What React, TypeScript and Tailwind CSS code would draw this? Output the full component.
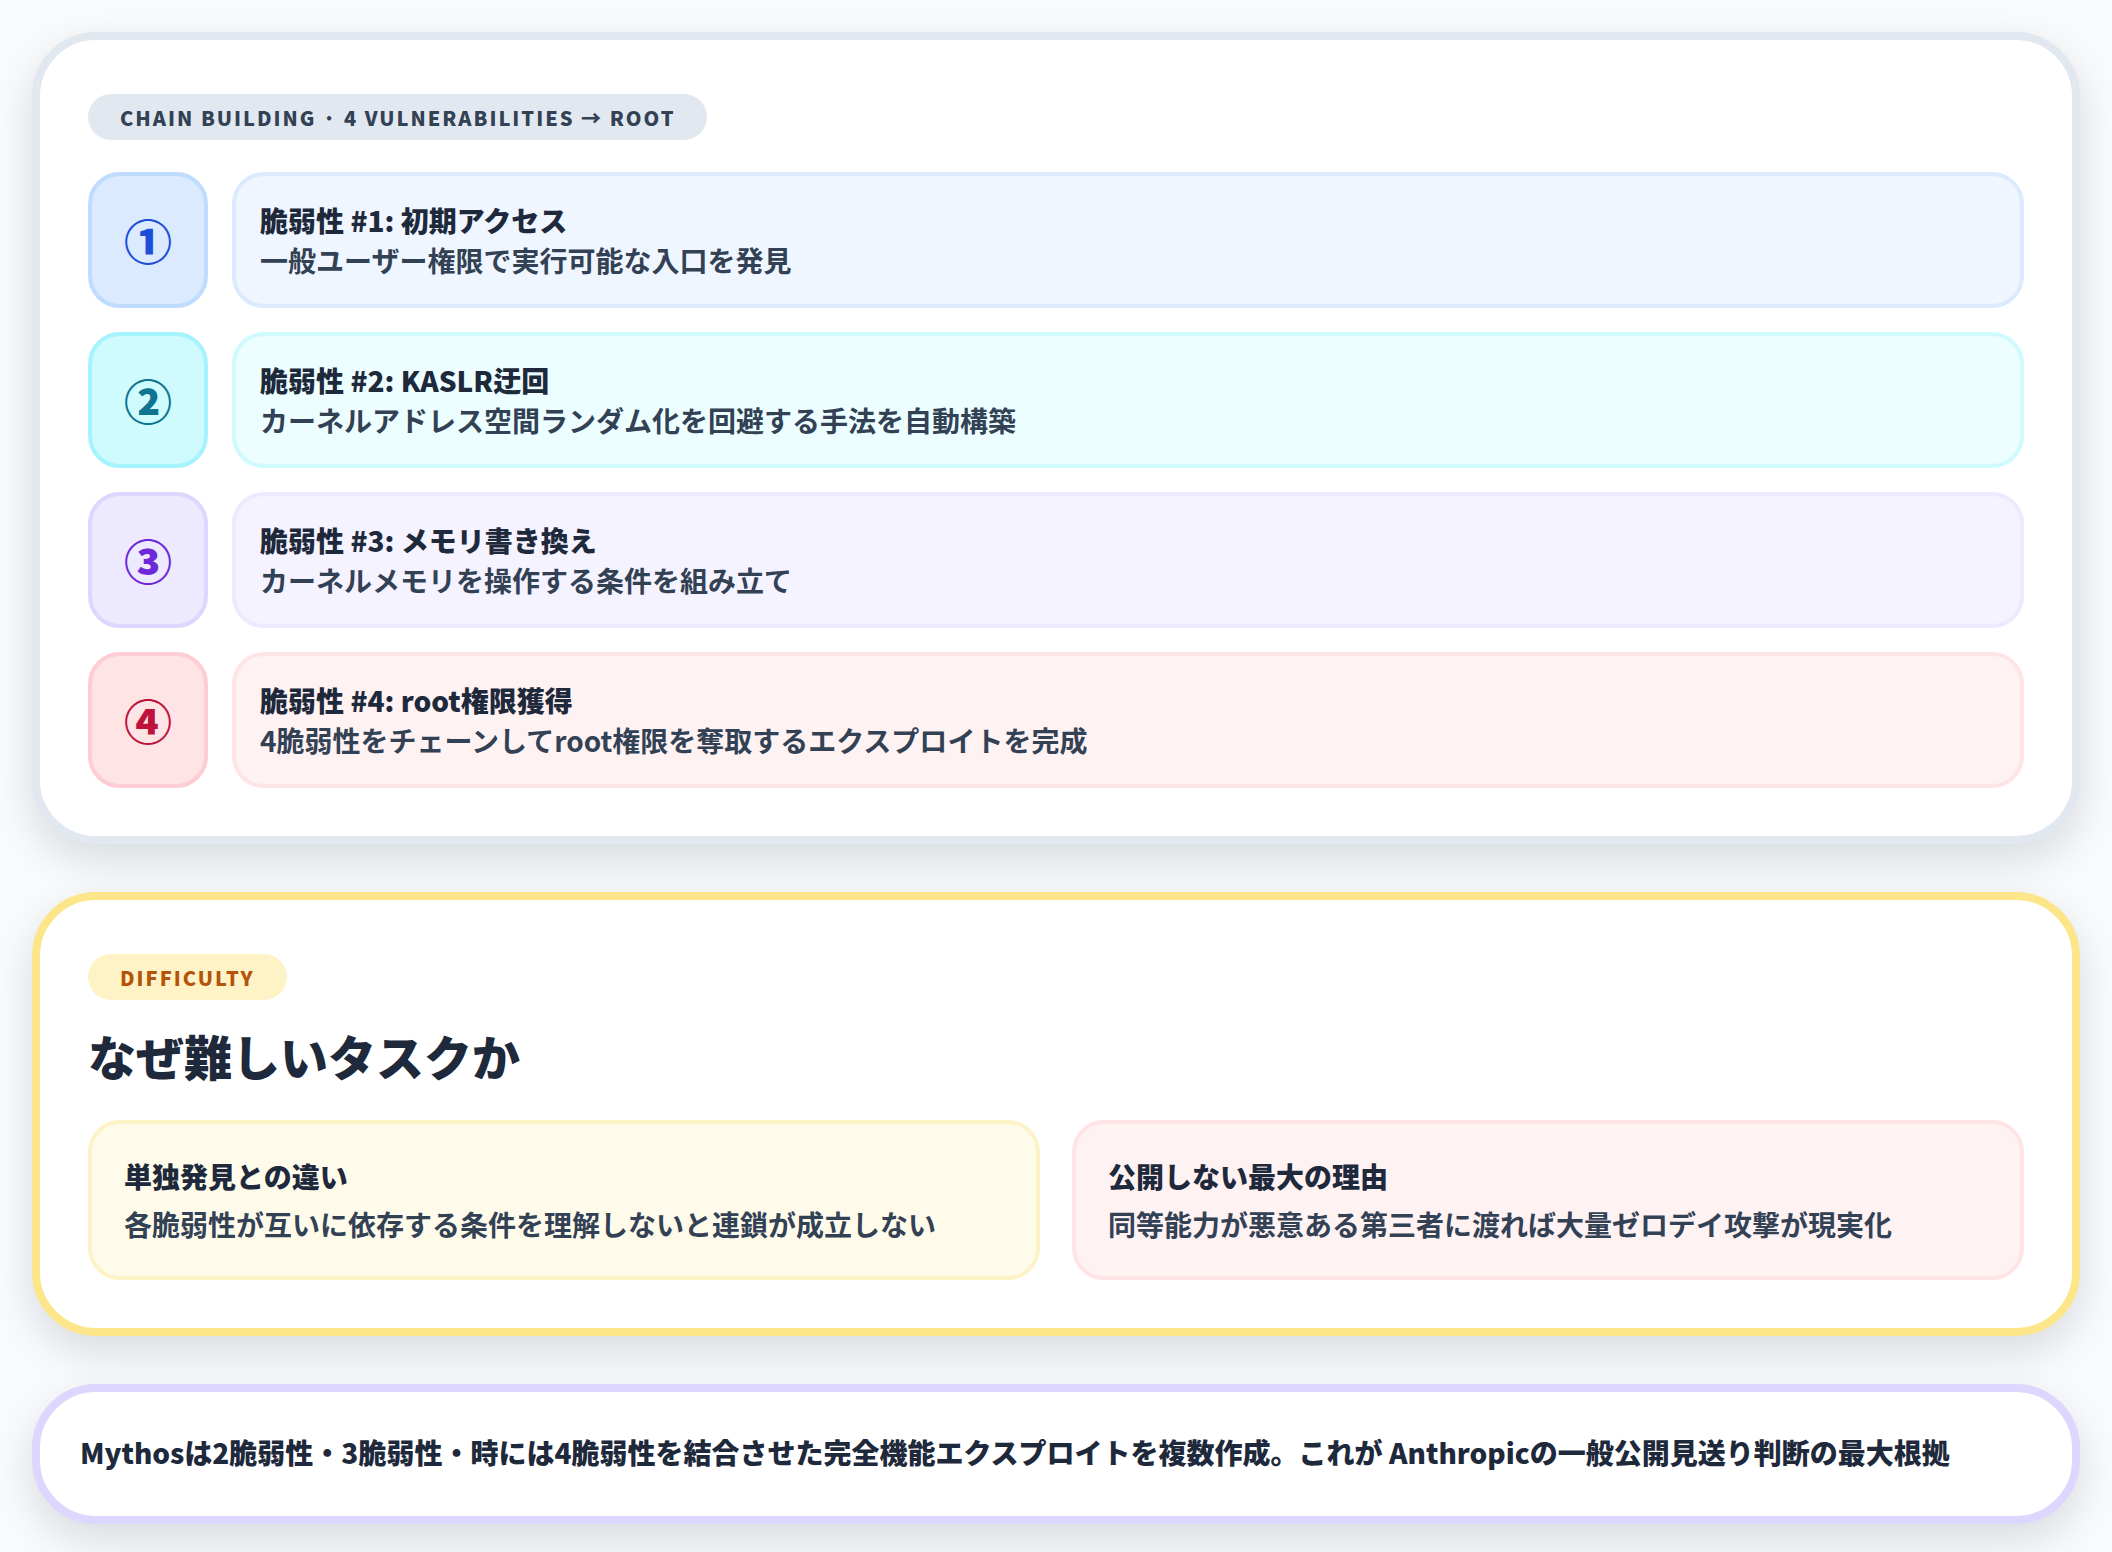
const STEPS = [
  {
    mark: '①',
    title: '脆弱性 #1: 初期アクセス',
    desc: '一般ユーザー権限で実行可能な入口を発見',
    box: 'bg-[#dbeafe] border-[#bfdbfe] text-[#1d4ed8]',
    body: 'bg-[#eff6ff] border-[#dbeafe]',
  },
  {
    mark: '②',
    title: '脆弱性 #2: KASLR迂回',
    desc: 'カーネルアドレス空間ランダム化を回避する手法を自動構築',
    box: 'bg-[#cffafe] border-[#a5f3fc] text-[#0e7490]',
    body: 'bg-[#ecfeff] border-[#cffafe]',
  },
  {
    mark: '③',
    title: '脆弱性 #3: メモリ書き換え',
    desc: 'カーネルメモリを操作する条件を組み立て',
    box: 'bg-[#ede9fe] border-[#ddd6fe] text-[#6d28d9]',
    body: 'bg-[#f5f3ff] border-[#ede9fe]',
  },
  {
    mark: '④',
    title: '脆弱性 #4: root権限獲得',
    desc: '4脆弱性をチェーンしてroot権限を奪取するエクスプロイトを完成',
    box: 'bg-[#ffe4e6] border-[#fecdd3] text-[#be123c]',
    body: 'bg-[#fef2f3] border-[#ffe4e6]',
  },
];

const CARD = 'bg-white border-[8px] rounded-[64px] shadow-[0_16px_40px_rgba(15,23,42,0.13)]';

function Pill({ className, children }: { className: string; children: React.ReactNode }) {
  return (
    <span className={`inline-block h-[46px] rounded-full px-8 text-[20px] leading-[48px] font-black tracking-[2px] ${className}`}>
      {children}
    </span>
  );
}

export default function App() {
  return (
    <div className="min-h-[1552px] bg-[#f8fafc] px-8 pt-8 font-['Noto_Sans_CJK_JP','Noto_Sans',sans-serif]">
      {/* Chain steps */}
      <section className={`${CARD} border-[#e2e8f0] px-12 pt-[54px] pb-12`}>
        <Pill className="bg-[#e2e8f0] text-[#334155]">CHAIN BUILDING · 4 VULNERABILITIES → ROOT</Pill>
        <div className="mt-8 flex flex-col gap-6">
          {STEPS.map((step) => (
            <div key={step.mark} className="flex gap-6">
              <div className={`flex w-[120px] shrink-0 items-center justify-center rounded-[32px] border-4 pb-[3px] text-[48px] leading-none font-black ${step.box}`}>
                {step.mark}
              </div>
              <div className={`flex-1 rounded-[32px] border-4 p-6 text-[28px] leading-10 ${step.body}`}>
                <div className="font-black text-[#1e293b]">{step.title}</div>
                <div className="font-bold text-[#334155]">{step.desc}</div>
              </div>
            </div>
          ))}
        </div>
      </section>

      {/* Difficulty */}
      <section className={`${CARD} mt-12 border-[#fde68a] px-12 pt-[54px] pb-12`}>
        <Pill className="bg-[#fef3c7] text-[#b45309]">DIFFICULTY</Pill>
        <h2 className="mt-[21px] mb-[31px] text-[48px] leading-[68px] font-black text-[#1e293b]">なぜ難しいタスクか</h2>
        <div className="grid grid-cols-2 gap-8">
          <div className="rounded-[32px] border-4 border-[#fef3c7] bg-[#fffbeb] px-8 py-7 text-[28px] leading-[48px]">
            <div className="font-black text-[#1e293b]">単独発見との違い</div>
            <div className="font-bold text-[#334155]">各脆弱性が互いに依存する条件を理解しないと連鎖が成立しない</div>
          </div>
          <div className="rounded-[32px] border-4 border-[#ffe4e6] bg-[#fef2f3] px-8 py-7 text-[28px] leading-[48px]">
            <div className="font-black text-[#1e293b]">公開しない最大の理由</div>
            <div className="font-bold text-[#334155]">同等能力が悪意ある第三者に渡れば大量ゼロデイ攻撃が現実化</div>
          </div>
        </div>
      </section>

      {/* Conclusion */}
      <section className={`${CARD} mt-12 border-[#ddd6fe] px-10 pt-9 pb-10 text-[28px] leading-12 font-black text-[#1e293b]`}>
        Mythosは2脆弱性・3脆弱性・時には4脆弱性を結合させた完全機能エクスプロイトを複数作成。これが Anthropicの一般公開見送り判断の最大根拠
      </section>
    </div>
  );
}
